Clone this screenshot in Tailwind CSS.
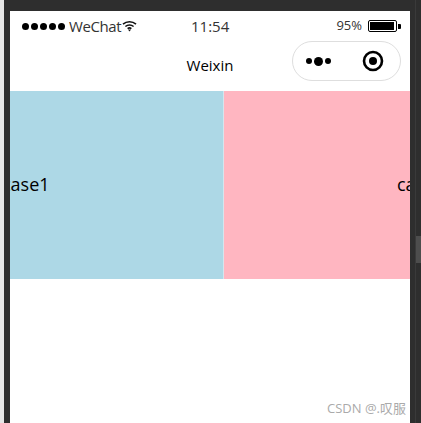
<!doctype html>
<html lang="en">
<head>
<meta charset="UTF-8" />
<title>Weixin</title>
<script src="https://cdn.jsdelivr.net/npm/@tailwindcss/browser@4"></script>
</head>
<body class="w-[421px] h-[423px] overflow-hidden bg-[#2e2e2e] font-['Open_Sans','Noto_Sans_CJK_SC',sans-serif]">
  <div class="flex h-[423px]">
    <!-- window edge -->
    <div class="w-[4px] bg-[#e6e6e6]"></div>
    <div class="w-[6px] bg-[#2e2e2e]"></div>

    <!-- phone screen -->
    <div class="w-[400px] mt-[11px] bg-white flex flex-col">
      <!-- status bar -->
      <div class="h-[30px] flex items-center pl-[12px] pr-[9px] text-[#333]">
        <div class="w-[169px] flex items-center">
          <div class="flex gap-[2px]">
            <span class="w-[7px] h-[7px] rounded-full bg-black"></span>
            <span class="w-[7px] h-[7px] rounded-full bg-black"></span>
            <span class="w-[7px] h-[7px] rounded-full bg-black"></span>
            <span class="w-[7px] h-[7px] rounded-full bg-black"></span>
            <span class="w-[7px] h-[7px] rounded-full bg-black"></span>
          </div>
          <span class="ml-[4px] text-[15px] tracking-[-0.4px]">WeChat</span>
          <svg class="ml-[1px]" width="15" height="12" viewBox="0 0 15 12" fill="none" stroke="#111" stroke-width="1.6">
            <path d="M1 4.2C4.6 1 10.4 1 14 4.2"/>
            <path d="M3.4 6.5C5.7 4.6 9.3 4.6 11.6 6.5"/>
            <path d="M5.6 8.6C6.6 7.9 8.4 7.9 9.4 8.6"/>
            <path d="M7.5 11.5L5.9 9.6H9.1Z" fill="#111" stroke="none"/>
          </svg>
        </div>
        <span class="text-[15px]">11:54</span>
        <span class="ml-auto text-[13px]">95%</span>
        <div class="ml-[6px] flex items-center gap-[1px]">
          <div class="w-[29px] h-[12px] border border-black rounded-[2px] p-[1px]">
            <div class="w-[24px] h-full bg-black"></div>
          </div>
          <div class="w-[3px] h-[5px] bg-black rounded-r-[1px]"></div>
        </div>
      </div>

      <!-- nav bar -->
      <div class="h-[50px] relative flex items-center justify-center">
        <span class="text-[15px] text-black mt-[-2px]">Weixin</span>
        <div class="absolute right-[9px] top-[0px] w-[109px] h-[40px] border border-[#dedede] rounded-full flex items-center">
          <div class="ml-[13px] flex items-center gap-[2px]">
            <span class="w-[6px] h-[6px] rounded-full bg-black"></span>
            <span class="w-[9px] h-[9px] rounded-full bg-black"></span>
            <span class="w-[6px] h-[6px] rounded-full bg-black"></span>
          </div>
          <svg class="ml-[31px]" width="22" height="22" viewBox="0 0 22 22">
            <circle cx="11" cy="11" r="9" fill="none" stroke="#000" stroke-width="2.6"/>
            <circle cx="11" cy="11" r="4" fill="#000"/>
          </svg>
        </div>
      </div>

      <!-- swiper -->
      <div class="h-[188px] flex overflow-hidden text-[18px] text-black">
        <div class="w-[213px] shrink-0 bg-[#add8e6] flex items-center overflow-hidden">
          <span class="ml-[-8px] mt-[-1px]">case1</span>
        </div>
        <div class="w-[1px] shrink-0 bg-[#d5e6ee]"></div>
        <div class="flex-1 bg-[#ffb6c1] flex items-center overflow-hidden">
          <span class="ml-[173px] mt-[-1px]">case2</span>
        </div>
      </div>

      <!-- watermark -->
      <div class="mt-auto pb-[7px] pr-[4px] text-right text-[13px] leading-[16px] text-[#aaaaaa]">CSDN @.叹服</div>
    </div>

    <!-- right edge with scrollbar -->
    <div class="w-[6px] bg-[#2e2e2e] border-r border-[#3a3a3a]"></div>
    <div class="w-[5px] pt-[236px]">
      <div class="h-[27px] bg-[#4d4d4d]"></div>
    </div>
  </div>
</body>
</html>
